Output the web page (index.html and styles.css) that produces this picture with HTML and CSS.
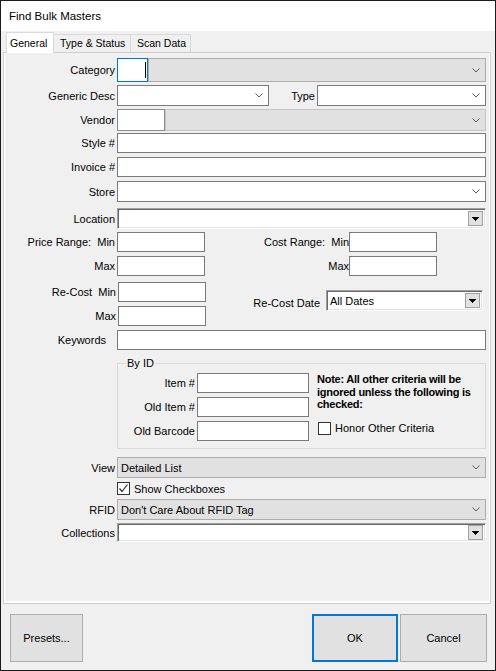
FILE: index.html
```html
<!DOCTYPE html>
<html>
<head>
<meta charset="utf-8">
<title>Find Bulk Masters</title>
<link rel="stylesheet" href="styles.css">
</head>
<body>
<div class="window">
  <div class="titlebar">Find Bulk Masters</div>
  <div class="tabs">
    <div class="tab active">General</div>
    <div class="tab t2">Type &amp; Status</div>
    <div class="tab t3">Scan Data</div>
  </div>
  <div class="panel">
    <div class="row r-cat">
      <span class="lbl">Category</span>
      <div class="cat-edit"><span class="caret"></span></div>
      <div class="combo grey grow"><svg class="chev" width="8" height="5" viewBox="0 0 8 5"><path d="M0.5 0.5L4 4L7.5 0.5" fill="none" stroke="#5a5a5a" stroke-width="1"/></svg></div>
    </div>
    <div class="row r-gen">
      <span class="lbl">Generic Desc</span>
      <div class="combo white w-gen"><svg class="chev" width="8" height="5" viewBox="0 0 8 5"><path d="M0.5 0.5L4 4L7.5 0.5" fill="none" stroke="#5a5a5a" stroke-width="1"/></svg></div>
      <span class="lbl-type">Type</span>
      <div class="combo white grow"><svg class="chev" width="8" height="5" viewBox="0 0 8 5"><path d="M0.5 0.5L4 4L7.5 0.5" fill="none" stroke="#5a5a5a" stroke-width="1"/></svg></div>
    </div>
    <div class="row r-ven">
      <span class="lbl">Vendor</span>
      <div class="ven-edit"></div>
      <div class="combo grey soft grow"><svg class="chev" width="8" height="5" viewBox="0 0 8 5"><path d="M0.5 0.5L4 4L7.5 0.5" fill="none" stroke="#5a5a5a" stroke-width="1"/></svg></div>
    </div>
    <div class="row r-style">
      <span class="lbl">Style #</span>
      <div class="input grow"></div>
    </div>
    <div class="row r-inv">
      <span class="lbl">Invoice #</span>
      <div class="input grow"></div>
    </div>
    <div class="row r-store">
      <span class="lbl">Store</span>
      <div class="combo white grow"><svg class="chev" width="8" height="5" viewBox="0 0 8 5"><path d="M0.5 0.5L4 4L7.5 0.5" fill="none" stroke="#5a5a5a" stroke-width="1"/></svg></div>
    </div>
    <div class="row r-loc">
      <span class="lbl">Location</span>
      <div class="sunken grow"><span class="ddbtn"><svg width="7" height="4" viewBox="0 0 7 4" shape-rendering="crispEdges"><path d="M0 0h7v1h-1v1h-1v1h-1v1h-1v-1h-1v-1h-1v-1h-1z" fill="#000"/></svg></span></div>
    </div>
    <div class="row r-price">
      <span class="lbl">Price Range:&nbsp; Min</span>
      <div class="input small"></div>
      <span class="lbl-right">Cost Range:&nbsp; Min</span>
      <div class="input small"></div>
    </div>
    <div class="row r-max">
      <span class="lbl">Max</span>
      <div class="input small"></div>
      <span class="lbl-right">Max</span>
      <div class="input small"></div>
    </div>
    <div class="recost">
      <div class="recost-left">
        <div class="row">
          <span class="lbl lbl-rc">Re-Cost&nbsp; Min</span>
          <div class="input small"></div>
        </div>
        <div class="row r-rcmax">
          <span class="lbl lbl-rc">Max</span>
          <div class="input small"></div>
        </div>
      </div>
      <span class="lbl-rcdate">Re-Cost Date</span>
      <div class="sunken rc-combo"><span class="sunken-text">All Dates</span><span class="ddbtn"><svg width="7" height="4" viewBox="0 0 7 4" shape-rendering="crispEdges"><path d="M0 0h7v1h-1v1h-1v1h-1v1h-1v-1h-1v-1h-1v-1h-1z" fill="#000"/></svg></span></div>
    </div>
    <div class="row r-key">
      <span class="lbl lbl-key">Keywords</span>
      <div class="input grow"></div>
    </div>
    <div class="group">
      <span class="legend">By ID</span>
      <div class="idcol">
        <div class="idrow"><span class="idlbl">Item #</span><div class="input idin"></div></div>
        <div class="idrow"><span class="idlbl">Old Item #</span><div class="input idin"></div></div>
        <div class="idrow"><span class="idlbl">Old Barcode</span><div class="input idin"></div></div>
      </div>
      <div class="notecol">
        <div class="note">Note: All other criteria will be<br>ignored unless the following is<br>checked:</div>
        <div class="check-row honor"><span class="checkbox"></span><span>Honor Other Criteria</span></div>
      </div>
    </div>
    <div class="row r-view">
      <span class="lbl">View</span>
      <div class="combo grey grow"><span class="ctext">Detailed List</span><svg class="chev" width="8" height="5" viewBox="0 0 8 5"><path d="M0.5 0.5L4 4L7.5 0.5" fill="none" stroke="#5a5a5a" stroke-width="1"/></svg></div>
    </div>
    <div class="check-row showcb">
      <span class="checkbox"><svg width="11" height="11" viewBox="0 0 11 11"><path d="M1.5 5.5L4 8.5L9.5 1.5" fill="none" stroke="#333" stroke-width="1.2"/></svg></span>
      <span>Show Checkboxes</span>
    </div>
    <div class="row r-rfid">
      <span class="lbl">RFID</span>
      <div class="combo grey grow"><span class="ctext">Don't Care About RFID Tag</span><svg class="chev" width="8" height="5" viewBox="0 0 8 5"><path d="M0.5 0.5L4 4L7.5 0.5" fill="none" stroke="#5a5a5a" stroke-width="1"/></svg></div>
    </div>
    <div class="row r-coll">
      <span class="lbl">Collections</span>
      <div class="sunken grow"><span class="ddbtn"><svg width="7" height="4" viewBox="0 0 7 4" shape-rendering="crispEdges"><path d="M0 0h7v1h-1v1h-1v1h-1v1h-1v-1h-1v-1h-1v-1h-1z" fill="#000"/></svg></span></div>
    </div>
  </div>
  <div class="footer">
    <div class="btn presets">Presets...</div>
    <div class="spacer"></div>
    <div class="btn ok">OK</div>
    <div class="btn cancel">Cancel</div>
  </div>
</div>
</body>
</html>
```

FILE: styles.css
```css
* { box-sizing: border-box; }
html, body { margin: 0; padding: 0; background: #fff; }
body {
  font-family: "Liberation Sans", Arial, sans-serif;
  font-size: 11px;
  color: #000;
}
.window {
  width: 496px;
  height: 671px;
  border: 1px solid #1c1c1c;
  background: #f0f0f0;
  display: flex;
  flex-direction: column;
}
.titlebar {
  height: 30px;
  flex: none;
  background: #fff;
  font-size: 11.5px;
  line-height: 30px;
  padding-left: 8px;
}
.tabs {
  height: 22px;
  flex: none;
  display: flex;
  align-items: flex-end;
  padding-left: 5px;
  margin-bottom: -1px;
  position: relative;
  z-index: 1;
  font-size: 10.5px;
}
.tab {
  height: 18px;
  margin-bottom: 1px;
  border: 1px solid #d9d9d9;
  border-bottom: none;
  background: #f0f0f0;
  line-height: 17px;
  white-space: nowrap;
}
.tab.active {
  height: 21px;
  margin-bottom: 0;
  width: 48px;
  background: #fff;
  padding-left: 3px;
  line-height: 20px;
}
.tab.t2 { width: 77px; padding-left: 6px; border-left: none; }
.tab.t3 { width: 60px; padding-left: 6px; border-left: none; }

.panel {
  height: 552px;
  flex: none;
  margin: 0 4px 0 2px;
  border: 1px solid #cfcfcf;
  box-shadow: inset 1px 0 #fff, inset -1px 0 #fff, inset 0 -2px #fff;
  background: #f0f0f0;
  padding: 5px 4px 0 0;
  display: flex;
  flex-direction: column;
}
.row {
  display: flex;
  align-items: center;
  flex: none;
}
.lbl {
  width: 111px;
  flex: none;
  text-align: right;
  margin-right: 2px;
  white-space: nowrap;
}
.grow { flex: 1; }

.combo {
  height: 100%;
  display: flex;
  align-items: center;
  justify-content: flex-end;
  padding: 0 5px 0 3px;
}
.combo .ctext { flex: 1; white-space: nowrap; }
.combo.grey { background: #e1e1e1; border: 1px solid #adadad; }
.combo.grey.soft { border-color: #c4c4c4; }
.combo.white { background: #fff; border: 1px solid #7a7a7a; }
.chev { display: block; flex: none; }

.input {
  height: 100%;
  background: #fff;
  border: 1px solid #7a7a7a;
}
.input.small { width: 88px; flex: none; }

.r-cat { height: 24px; }
.cat-edit {
  width: 31px;
  height: 100%;
  flex: none;
  background: #fff;
  border: 1px solid #0078d7;
  display: flex;
  align-items: center;
  justify-content: flex-end;
  padding-right: 1px;
}
.caret { width: 1px; height: 16px; background: #000; }

.r-gen { height: 21px; margin-top: 3px; }
.w-gen { width: 152px; flex: none; }
.lbl-type { width: 46px; flex: none; text-align: right; margin-right: 2px; }

.r-ven { height: 22px; margin-top: 3px; }
.ven-edit {
  width: 48px;
  height: 100%;
  flex: none;
  background: #fff;
  border: 1px solid #8c8c8c;
}
.r-style { height: 20px; margin-top: 2px; }
.r-inv { height: 20px; margin-top: 4px; }
.r-store { height: 21px; margin-top: 4px; }
.r-loc { height: 21px; margin-top: 6px; }

.sunken {
  height: 100%;
  background: #fff;
  border: 1px solid;
  border-color: #a0a0a0 #fff #fff #a0a0a0;
  box-shadow: inset 1px 1px 0 #696969, inset -1px -1px 0 #e3e3e3;
  display: flex;
  align-items: center;
  justify-content: flex-end;
  padding: 2px 2px 2px 3px;
}
.ddbtn {
  width: 15px;
  height: 15px;
  flex: none;
  background: #e1e1e1;
  border: 1px solid #a0a0a0;
  display: flex;
  align-items: center;
  justify-content: center;
}
.ddbtn svg { display: block; }
.sunken-text { flex: 1; align-self: flex-start; line-height: 14px; white-space: nowrap; }

.r-price { height: 20px; margin-top: 3px; }
.r-max { height: 20px; margin-top: 4px; }
.lbl-right { width: 144px; flex: none; text-align: right; white-space: nowrap; }

.recost {
  display: flex;
  align-items: flex-start;
  margin-top: 6px;
  flex: none;
}
.recost .row { height: 20px; }
.recost .r-rcmax { margin-top: 4px; }
.lbl-rc { width: 112px; margin-right: 2px; }
.lbl-rcdate {
  width: 114px;
  flex: none;
  text-align: right;
  margin-top: 15px;
  line-height: 13px;
  white-space: nowrap;
}
.rc-combo {
  width: 157px;
  height: 21px;
  margin-left: 6px;
  margin-top: 8px;
  flex: none;
}
.rc-combo .sunken-text { align-self: center; }

.r-key { height: 20px; margin-top: 4px; }
.lbl-key { padding-right: 9px; }

.group {
  position: relative;
  margin: 13px 0 0 113px;
  height: 86px;
  border: 1px solid #dcdcdc;
  display: flex;
  padding: 9px 0 0 0;
  flex: none;
}
.legend {
  position: absolute;
  left: 8px;
  top: -7px;
  line-height: 13px;
  background: #f0f0f0;
  padding: 0 1px;
}
.idcol { display: flex; flex-direction: column; gap: 4px; }
.idrow { display: flex; align-items: center; height: 20px; }
.idlbl { width: 77px; text-align: right; margin-right: 2px; white-space: nowrap; }
.idin { width: 112px; }
.notecol { margin-left: 8px; display: flex; flex-direction: column; }
.note {
  font-weight: bold;
  line-height: 12.5px;
  letter-spacing: -0.25px;
  white-space: nowrap;
}
.check-row { display: flex; align-items: center; height: 13px; flex: none; }
.checkbox {
  width: 13px;
  height: 13px;
  border: 1px solid #333;
  background: #fff;
  flex: none;
  margin-right: 4px;
  display: flex;
  align-items: center;
  justify-content: center;
}
.checkbox svg { display: block; }
.honor { margin-top: 11px; margin-left: 1px; }

.r-view { height: 21px; margin-top: 8px; }
.showcb { margin-top: 4px; margin-left: 113px; }
.r-rfid { height: 21px; margin-top: 4px; }
.r-coll { height: 19px; margin-top: 3px; }

.footer {
  flex: 1;
  display: flex;
  align-items: flex-start;
  padding: 10px 8px 0 9px;
}
.spacer { flex: 1; }
.btn {
  height: 48px;
  background: #e1e1e1;
  border: 1px solid #adadad;
  display: flex;
  align-items: center;
  justify-content: center;
  flex: none;
}
.presets { width: 73px; }
.ok { width: 86px; border: 2px solid #0078d7; margin-right: 2px; }
.cancel { width: 87px; }
```
